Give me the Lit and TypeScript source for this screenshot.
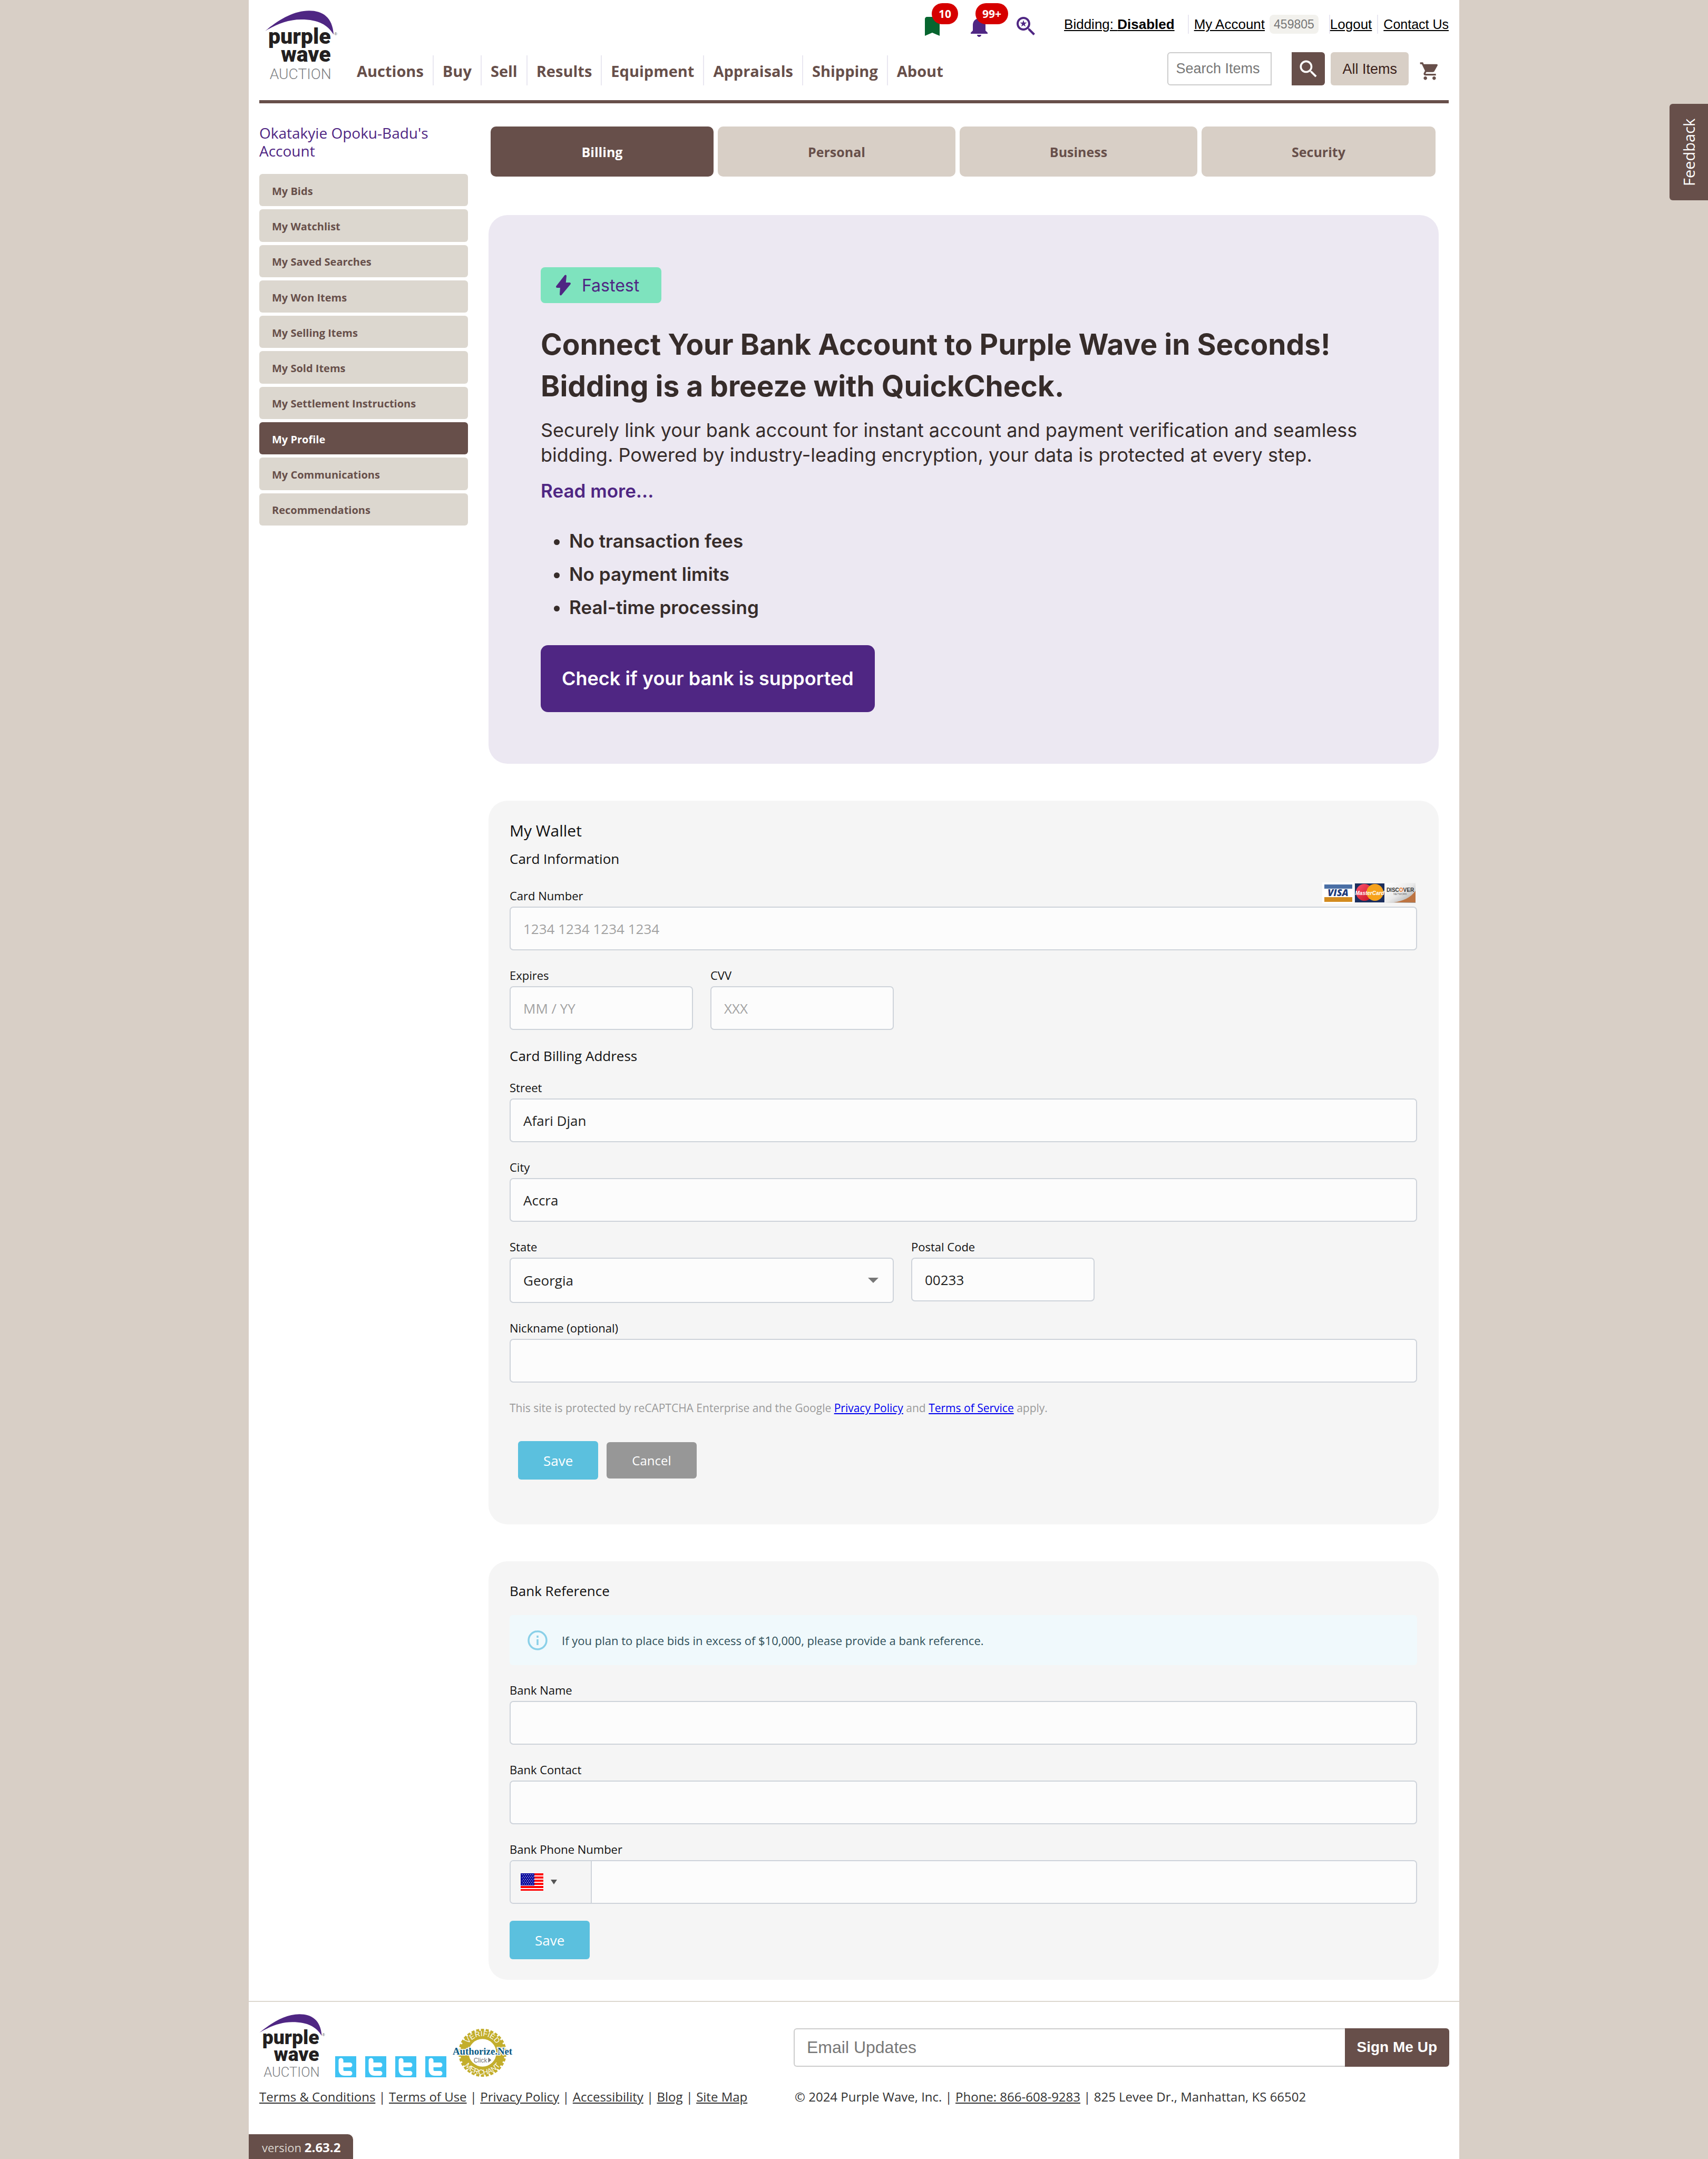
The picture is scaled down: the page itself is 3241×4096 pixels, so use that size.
import { LitElement, html, css, svg } from "lit";
import { customElement } from "lit/decorators.js";
import { classMap } from "lit/directives/class-map.js";

const NAV = ["Auctions", "Buy", "Sell", "Results", "Equipment", "Appraisals", "Shipping", "About"];

const SIDE = [
  "My Bids",
  "My Watchlist",
  "My Saved Searches",
  "My Won Items",
  "My Selling Items",
  "My Sold Items",
  "My Settlement Instructions",
  "My Profile",
  "My Communications",
  "Recommendations",
];

const TABS = ["Billing", "Personal", "Business", "Security"];

const PERKS = ["No transaction fees", "No payment limits", "Real-time processing"];

const FOOT = ["Terms & Conditions", "Terms of Use", "Privacy Policy", "Accessibility", "Blog", "Site Map"];

const logo = html`
  <svg class="logo-art" viewBox="0 0 128 122" role="img" aria-label="Purple Wave Auction">
    <path
      fill="#4f2683"
      d="M0 35.7C24 16 50 .3 77 .3C101 .3 118 12 120 42C109 25 94 15.6 63 15.6C40 15.6 20 24 0 35.7Z"
    />
    <g font-family="Roboto, Liberation Sans, sans-serif" font-weight="900" font-size="38" fill="#231f20">
      <text x="115" y="58" text-anchor="end">purple</text>
      <text x="115" y="90" text-anchor="end">wave</text>
    </g>
    <text x="116" y="120.5" text-anchor="end" font-family="Roboto, sans-serif" font-weight="300" font-size="26" fill="#808285">AUCTION</text>
    <text x="121" y="43" font-family="Liberation Sans, sans-serif" font-size="7" fill="#58595b">®</text>
  </svg>
`;

const bookmarkIcon = html`<svg class="icon-48" viewBox="0 0 24 24" fill="#07652f"><path d="M17 3H7c-1.1 0-2 .9-2 2v16l7-3 7 3V5c0-1.1-.9-2-2-2z" /></svg>`;

const bellIcon = html`<svg class="icon-48" viewBox="0 0 24 24" fill="#4f2683"><path d="M12 22c1.1 0 2-.9 2-2h-4c0 1.1.89 2 2 2zm6-6v-5c0-3.07-1.64-5.64-4.5-6.32V4c0-.83-.67-1.5-1.5-1.5s-1.5.67-1.5 1.5v.68C7.63 5.36 6 7.92 6 11v5l-2 2v1h16v-1l-2-2z" /></svg>`;

const GLASS =
  "M15.5 14h-.79l-.28-.27C15.41 12.59 16 11.11 16 9.5 16 5.91 13.09 3 9.5 3S3 5.91 3 9.5 5.91 16 9.5 16c1.61 0 3.09-.59 4.23-1.57l.27.28v.79l5 4.99L20.49 19l-4.99-5zm-6 0C7.01 14 5 11.99 5 9.5S7.01 5 9.5 5 14 7.01 14 9.5 11.99 14 9.5 14z";

const savedSearchIcon = html`<svg class="icon-48" viewBox="0 0 24 24" fill="#4f2683"><path d=${GLASS} /><path d="M9.5 6l.8 2.4h2.5l-2 1.5.75 2.4-2.05-1.45-2.05 1.45.75-2.4-2-1.5h2.5z" /></svg>`;

const searchIcon = html`<svg class="icon-44" viewBox="0 0 24 24" fill="#fff"><path d=${GLASS} /></svg>`;

const cartIcon = html`<svg class="icon-40" viewBox="0 0 24 24" fill="#674f4a"><path d="M7 18c-1.1 0-1.99.9-1.99 2S5.9 22 7 22s2-.9 2-2-.9-2-2-2zM1 2v2h2l3.6 7.59-1.35 2.45c-.16.28-.25.61-.25.96 0 1.1.9 2 2 2h12v-2H7.42c-.14 0-.25-.11-.25-.25l.03-.12.9-1.63h7.45c.75 0 1.41-.41 1.75-1.03l3.58-6.49c.08-.14.12-.31.12-.48 0-.55-.45-1-1-1H5.21l-.94-2H1zm16 16c-1.1 0-1.99.9-1.99 2s.89 2 1.99 2 2-.9 2-2-.9-2-2-2z" /></svg>`;

const boltIcon = html`<svg class="bolt" viewBox="0 0 28 40"><path fill="#4f2683" stroke="#4f2683" stroke-width="4" stroke-linejoin="round" d="M18 2.500L2 23H10L9 37.500L26 17H16.500Z" /></svg>`;

const infoIcon = html`<svg class="info-icon" viewBox="0 0 38 38" fill="none" stroke="#8ad0e8"><circle cx="19" cy="19" r="17" stroke-width="3.500" /><path stroke-width="3.500" d="M19 17v11M19 10v4" /></svg>`;

const caret = (cls: string) => html`<svg class=${cls} viewBox="0 0 20 10" preserveAspectRatio="none" aria-hidden="true"><path d="M0 0h20L10 10z" fill="currentColor" /></svg>`;

const cardBrands = html`
  <svg class="brands" viewBox="0 0 177 40" role="img" aria-label="Visa, MasterCard, Discover">
    <defs>
      <linearGradient id="disc" x1="0" y1="0" x2="1" y2="1">
        <stop offset="0" stop-color="#fff" />
        <stop offset=".5" stop-color="#eaeaea" />
        <stop offset="1" stop-color="#9a9a9a" />
      </linearGradient>
      <linearGradient id="mcl" x1="0" y1="0" x2="1" y2="1">
        <stop offset="0" stop-color="#ff5470" />
        <stop offset="1" stop-color="#c4101c" />
      </linearGradient>
    </defs>
    <rect width="60" height="40" fill="#fff" />
    <rect x="4" y="4" width="53" height="8" fill="#4a6fa5" />
    <rect x="4" y="28" width="53" height="9" fill="#d38b1e" />
    <text x="30" y="26" text-anchor="middle" font-family="Open Sans, sans-serif" font-weight="800" font-style="italic" font-size="18" fill="#1d3c7c">VISA</text>
    <rect x="62" y="2" width="56" height="36" fill="#1c2f5e" />
    <circle cx="80" cy="19" r="16" fill="url(#mcl)" />
    <circle cx="100" cy="19" r="16" fill="#f6a21c" />
    <text x="90" y="24" text-anchor="middle" font-family="Liberation Sans, sans-serif" font-weight="700" font-style="italic" font-size="10" fill="#fff">MasterCard</text>
    <rect x="119" y="1" width="58" height="38" fill="url(#disc)" />
    <path d="M177 16C168 29 152 36 136 38H177Z" fill="#bd7442" />
    <text x="148" y="18" text-anchor="middle" font-family="Liberation Sans, sans-serif" font-weight="700" font-size="10" fill="#333">DISC<tspan fill="#e8792a">O</tspan>VER</text>
    <text x="148" y="24" text-anchor="middle" font-family="Liberation Sans, sans-serif" font-size="5" fill="#666">NETWORK</text>
  </svg>
`;

const stars = Array.from({ length: 7 }, (_, r) =>
  Array.from({ length: 6 }, (_, c) => svg`<rect x=${2 + c * 4 + (r % 2) * 2} y=${2 + r * 3} width="2" height="1" fill="#c4c8ee" />`)
);

const flag = html`
  <svg class="flag" viewBox="0 0 43 33" role="img" aria-label="United States">
    <rect width="43" height="33" fill="#fff" />
    ${[0, 6, 12, 18, 24, 30].map((y) => svg`<rect y=${y} width="43" height=${y === 30 ? 3 : 4} fill="#f00" />`)}
    <rect width="26" height="23" fill="#0a0a9c" />
    ${stars}
  </svg>
`;

const twitter = html`
  <svg class="social" viewBox="0 0 40 40" aria-hidden="true">
    <rect width="40" height="40" fill="#3fc3f3" />
    <path d="M11 8V25Q11 32.500 18 32.500H28M12 16.500H28" fill="none" stroke="#fff" stroke-width="9" stroke-linecap="round" />
  </svg>
`;

const teeth = Array.from({ length: 30 }, (_, i) => svg`<rect x="54" y="1" width="6" height="8" fill="#c3ae2c" transform=${`rotate(${i * 12} 57 47)`} />`);

const seal = html`
  <svg class="seal" viewBox="0 0 114 94" role="img" aria-label="Authorize.Net verified merchant">
    <defs>
      <path id="arc-top" d="M25 47A32 32 0 0 1 89 47" />
      <path id="arc-bottom" d="M15 47A42 42 0 0 0 99 47" />
    </defs>
    ${teeth}
    <circle cx="57" cy="47" r="34.500" fill="none" stroke="#c3ae2c" stroke-width="16" />
    <g font-family="Liberation Sans, sans-serif" font-size="14" fill="#fff">
      <text text-anchor="middle"><textPath href="#arc-top" startOffset="50%">VERIFIED</textPath></text>
      <text text-anchor="middle"><textPath href="#arc-bottom" startOffset="50%">MERCHANT</textPath></text>
    </g>
    <text x="57" y="51" text-anchor="middle" font-family="Liberation Serif, serif" font-weight="700" font-size="19" fill="#0b5a86" stroke="#fff" stroke-width="3" paint-order="stroke">Authorize.Net</text>
    <text x="53" y="66" text-anchor="middle" font-family="Liberation Sans, sans-serif" font-size="12" fill="#777">Click</text>
    <path d="M68 56v10l6-5z" fill="#777" />
  </svg>
`;

interface Field {
  id: string;
  label: string;
  value?: string;
  placeholder?: string;
  cls?: string;
}

const field = ({ id, label, value = "", placeholder = "", cls = "" }: Field) => html`
  <div class="field ${cls}">
    <label class="label" for=${id}>${label}</label>
    <input class="box" id=${id} type="text" .value=${value} placeholder=${placeholder} />
  </div>
`;

@customElement("app-root")
export class AppRoot extends LitElement {
  static styles = css`
    :host {
      display: block;
      position: relative;
      min-height: 100vh;
      background: #d8cfc6;
      color: #111;
      font-family: "Open Sans", "Noto Sans", sans-serif;
      font-size: 26px;
      line-height: 40px;
    }
    * {
      box-sizing: border-box;
    }
    button,
    input,
    select {
      font: inherit;
      margin: 0;
      border: 0;
      padding: 0;
    }
    button {
      cursor: pointer;
    }
    h1,
    h2,
    h3,
    p,
    ul {
      margin: 0;
      padding: 0;
      font-weight: 400;
      font-size: inherit;
    }
    svg {
      display: block;
      flex: none;
      overflow: visible;
    }
    .page {
      display: flex;
      flex-direction: column;
      max-width: 2297px;
      min-height: 100vh;
      margin: 0 auto;
      background: #fff;
    }

    /* header */
    .header {
      display: flex;
      gap: 18px;
      margin: 0 20px;
      padding-bottom: 28px;
      border-bottom: 6px solid #674f4a;
    }
    .logo {
      padding: 20px 0 0 11px;
    }
    .logo-art {
      width: 127px;
      height: 120px;
    }
    .logo .logo-art {
      width: 139px;
      height: 132px;
    }
    .head-rows {
      display: flex;
      flex: 1;
      flex-direction: column;
      gap: 35px;
      padding-top: 28px;
    }
    .account {
      display: flex;
      justify-content: flex-end;
      height: 36px;
      font: 26px/36px "Liberation Sans", Arial, sans-serif;
    }
    .account a {
      color: #000;
    }
    .alerts {
      display: flex;
      gap: 41px;
      margin: -2px 48px 0 0;
    }
    .alert {
      position: relative;
      height: 48px;
    }
    .icon-48 {
      width: 48px;
      height: 48px;
    }
    .icon-44 {
      width: 44px;
      height: 44px;
    }
    .icon-40 {
      width: 40px;
      height: 40px;
    }
    .count {
      position: absolute;
      top: -20px;
      left: 100%;
      padding: 0 13px;
      border-radius: 20px;
      background: #d60000;
      color: #fff;
      font: 700 21px/40px "Open Sans", sans-serif;
      transform: translateX(-50%);
    }
    .bidding {
      margin-right: 25px;
    }
    .cell {
      display: flex;
      gap: 9px;
      padding: 0 10px;
      border-left: 2px solid #e9e7f1;
    }
    .cell.wide {
      padding-right: 20px;
    }
    .cell.tight {
      padding-left: 0;
    }
    .cell.last {
      padding-right: 0;
      font-size: 25px;
    }
    .chip {
      padding: 0 8px;
      border-radius: 8px;
      background: #f2f1ed;
      color: #777;
      font-size: 23px;
    }
    .main-row {
      display: flex;
      align-items: flex-end;
      justify-content: space-between;
    }
    .nav {
      display: flex;
    }
    .nav a {
      padding: 3px 17px 0;
      border-right: 2px solid #e9e7f1;
      color: #674f4a;
      font-weight: 700;
      font-size: 29px;
      line-height: 54px;
      text-decoration: none;
    }
    .nav a:last-child {
      border-right: 0;
    }
    .search {
      display: flex;
      align-items: center;
      padding-right: 16px;
      font: 27px/40px "Liberation Sans", Arial, sans-serif;
    }
    .search-box {
      width: 198px;
      height: 63px;
      margin-right: 38px;
      padding: 0 14px;
      border: 2px solid #ccc;
      border-radius: 6px 0 0 6px;
      background: #fff;
    }
    .search-box::placeholder,
    .mail-box::placeholder {
      color: #777;
      opacity: 1;
    }
    .search-btn {
      display: grid;
      place-items: center;
      width: 63px;
      height: 63px;
      border-radius: 0 6px 6px 0;
      background: #674f4a;
    }
    .all-items {
      height: 63px;
      margin: 0 20px 0 11px;
      padding: 0 22px;
      border-radius: 6px;
      background: #d8cfc6;
      color: #3b1f1a;
    }
    .cart {
      padding-top: 8px;
    }

    /* body columns */
    .columns {
      display: flex;
      gap: 39px;
      padding: 39px 39px 0 20px;
    }
    .side {
      flex: 0 0 396px;
    }
    .owner {
      margin-bottom: 27px;
      color: #4f2683;
      font-size: 28px;
      line-height: 34px;
    }
    .side-list {
      display: grid;
      grid-auto-rows: 1fr;
      gap: 6px;
      min-height: 667px;
      list-style: none;
    }
    .side-link {
      display: flex;
      align-items: center;
      height: 100%;
      padding: 4px 24px 0;
      border-radius: 6px;
      background: #dcd7cf;
      color: #674f4a;
      font-weight: 700;
      font-size: 20px;
      text-decoration: none;
    }
    .side-link.on {
      background: #674f4a;
      color: #fff;
    }
    .content {
      flex: 1;
      min-width: 0;
      padding-top: 5px;
    }
    .tabs {
      display: grid;
      grid-template-columns: 423fr 451fr 451fr 444fr;
      gap: 8px;
      margin: 0 6px 73px 4px;
    }
    .tab {
      height: 95px;
      border-radius: 10px;
      background: #d8cfc6;
      color: #674f4a;
      font-weight: 700;
      font-size: 25px;
    }
    .tab.on {
      background: #674f4a;
      color: #fff;
    }

    /* bank promo */
    .promo {
      margin-bottom: 70px;
      padding: 99px 99px 98px;
      border-radius: 36px;
      background: #ece8f2;
      color: #362c2a;
      font: 36px/47px Inter, sans-serif;
    }
    .fastest {
      display: inline-flex;
      gap: 21px;
      align-items: center;
      height: 68px;
      padding: 0 42px 0 29px;
      border-radius: 8px;
      background: #7ee3be;
      color: #4f2683;
      font-size: 32px;
      vertical-align: top;
    }
    .bolt {
      width: 28px;
      height: 40px;
    }
    .promo-title {
      margin: 39px 0 21px;
      font-weight: 700;
      font-size: 55px;
      line-height: 79px;
    }
    .promo-text {
      max-width: 1580px;
      margin-bottom: 21px;
    }
    .more {
      display: block;
      color: #4f2683;
      font-weight: 600;
      font-size: 35px;
      text-decoration: none;
    }
    .perks {
      margin: 40px 0;
      padding-left: 54px;
      font-weight: 600;
      font-size: 35px;
      line-height: 63px;
    }
    .check {
      height: 127px;
      padding: 0 40px;
      border-radius: 14px;
      background: #4f2683;
      color: #fff;
      font-weight: 600;
    }

    /* form cards */
    .card {
      display: flex;
      flex-direction: column;
      gap: 32px;
      margin-bottom: 70px;
      padding: 37px 41px 85px 40px;
      border-radius: 36px;
      background: #f5f5f5;
    }
    .card.short {
      margin-bottom: 40px;
      padding-top: 36px;
      padding-bottom: 39px;
    }
    .card-title {
      font-size: 30px;
    }
    .card-head {
      display: grid;
      gap: 13px;
      margin-bottom: -7px;
    }
    .card-sub {
      margin: -3px 0 -7px;
    }
    .short .card-sub {
      margin: 0 0 -6px;
    }
    .row {
      display: flex;
      gap: 33px;
    }
    .field {
      display: flex;
      flex-direction: column;
      gap: 6px;
    }
    .field.small {
      flex: 0 0 348px;
    }
    .field.medium {
      flex: 0 0 729px;
    }
    .label {
      font-size: 22px;
      line-height: 30px;
    }
    .label-row {
      display: flex;
      align-items: flex-end;
      justify-content: space-between;
      padding-right: 3px;
    }
    .brands {
      width: 177px;
      height: 40px;
    }
    .box {
      width: 100%;
      height: 83px;
      padding: 0 24px;
      border: 2px solid #ced3da;
      border-radius: 7px;
      background: #fcfcfc;
      color: #222;
    }
    .box::placeholder {
      color: #a2a2a2;
      opacity: 1;
    }
    .pick {
      display: grid;
      grid-template-columns: 1fr;
      align-items: center;
    }
    .pick > * {
      grid-area: 1 / 1;
    }
    .pick .box {
      height: 86px;
      appearance: none;
    }
    .pick-caret {
      justify-self: end;
      width: 20px;
      height: 10px;
      margin-right: 29px;
      color: #777;
      pointer-events: none;
    }
    .legal {
      margin-top: 1px;
      color: #9a9a9a;
      font-size: 21px;
      line-height: 30px;
    }
    .legal a {
      color: #00e;
    }
    .actions {
      display: flex;
      gap: 16px;
      align-items: center;
      margin: 16px 0 0 16px;
    }
    .save {
      align-self: flex-start;
      height: 73px;
      padding: 0 48px;
      border-radius: 6px;
      background: #5bc0de;
      color: #fff;
    }
    .cancel {
      height: 69px;
      padding: 0 48px;
      border-radius: 6px;
      background: #979797;
      color: #fff;
      font-size: 24px;
    }
    .note {
      display: flex;
      gap: 27px;
      align-items: center;
      min-height: 95px;
      padding: 0 34px;
      border-radius: 6px;
      background: #f0f9fc;
      color: #2f4f59;
      font-size: 22px;
    }
    .info-icon {
      width: 38px;
      height: 38px;
    }
    .phone {
      display: flex;
      height: 83px;
      overflow: hidden;
      border: 2px solid #ced3da;
      border-radius: 7px;
      background: #fcfcfc;
    }
    .country {
      display: flex;
      flex: 0 0 154px;
      gap: 14px;
      align-items: center;
      padding-left: 19px;
      border-right: 2px solid #ced3da;
      background: #f5f5f5;
      color: #555;
    }
    .flag {
      width: 43px;
      height: 33px;
    }
    .flag-caret {
      width: 12px;
      height: 9px;
    }
    .phone-input {
      flex: 1;
      padding: 0 24px;
      background: none;
    }

    /* footer */
    .footer {
      display: grid;
      grid-template-columns: 1014fr 1244fr;
      row-gap: 21px;
      align-items: center;
      padding: 23px 19px 0 20px;
      border-top: 2px solid #dcd7cf;
      color: #333;
      font-size: 24px;
      line-height: 32px;
    }
    .footer a {
      color: #333;
    }
    .marks {
      display: flex;
      align-items: flex-end;
    }
    .social {
      width: 40px;
      height: 40px;
      margin-left: 17px;
    }
    .seal {
      width: 113px;
      height: 93px;
      margin-left: 12px;
    }
    .mail {
      display: flex;
      margin-top: 6px;
      font: 32px/40px "Liberation Sans", Arial, sans-serif;
    }
    .mail-box {
      flex: 1;
      height: 73px;
      padding: 0 23px;
      border: 2px solid #ccc;
      border-right: 0;
      border-radius: 6px 0 0 6px;
      background: #fff;
    }
    .sign {
      height: 73px;
      padding: 0 23px;
      border-radius: 0 6px 6px 0;
      background: #674f4a;
      color: #fff;
      font-weight: 700;
      font-size: 28px;
    }
    .company {
      padding-left: 2px;
    }
    .version {
      align-self: flex-start;
      margin-top: auto;
      padding: 5px 24px 2px 25px;
      border-radius: 0 10px 0 0;
      background: #674f4a;
      color: #dcd7cf;
      font-size: 22px;
    }
    .version b {
      color: #fff;
      font-size: 24px;
    }
    .feedback {
      position: absolute;
      top: 197px;
      right: 0;
      width: 73px;
      height: 183px;
      border-radius: 0 6px 6px 0;
      background: #674f4a;
      color: #fff;
      font-size: 29px;
      writing-mode: vertical-rl;
      transform: rotate(180deg);
    }
  `;

  private header() {
    return html`
      <header class="header">
        <a class="logo" href="#home">${logo}</a>
        <div class="head-rows">
          <div class="account">
            <div class="alerts">
              <a class="alert" href="#watchlist" aria-label="Watchlist">${bookmarkIcon}<span class="count">10</span></a>
              <a class="alert" href="#alerts" aria-label="Notifications">${bellIcon}<span class="count">99+</span></a>
              <a class="alert" href="#saved" aria-label="Saved searches">${savedSearchIcon}</a>
            </div>
            <a class="bidding" href="#bidding">Bidding: <b>Disabled</b></a>
            <div class="cell wide"><a href="#account">My Account</a><span class="chip">459805</span></div>
            <div class="cell tight"><a href="#logout">Logout</a></div>
            <div class="cell last"><a href="#contact">Contact Us</a></div>
          </div>
          <div class="main-row">
            <nav class="nav">${NAV.map((n) => html`<a href="#${n.toLowerCase()}">${n}</a>`)}</nav>
            <div class="search">
              <input class="search-box" type="text" placeholder="Search Items" aria-label="Search Items" />
              <button class="search-btn" aria-label="Search">${searchIcon}</button>
              <button class="all-items">All Items</button>
              <a class="cart" href="#cart" aria-label="Cart">${cartIcon}</a>
            </div>
          </div>
        </div>
      </header>
    `;
  }

  private sidebar() {
    return html`
      <aside class="side">
        <h2 class="owner">Okatakyie Opoku-Badu's Account</h2>
        <ul class="side-list">
          ${SIDE.map((s) => html`<li><a class=${classMap({ "side-link": true, on: s === "My Profile" })} href="#side">${s}</a></li>`)}
        </ul>
      </aside>
    `;
  }

  private promo() {
    return html`
      <section class="promo">
        <span class="fastest">${boltIcon}Fastest</span>
        <h1 class="promo-title">Connect Your Bank Account to Purple Wave in Seconds!<br />Bidding is a breeze with QuickCheck.</h1>
        <p class="promo-text">
          Securely link your bank account for instant account and payment verification and seamless bidding. Powered by
          industry-leading encryption, your data is protected at every step.
        </p>
        <a class="more" href="#more">Read more...</a>
        <ul class="perks">
          ${PERKS.map((p) => html`<li>${p}</li>`)}
        </ul>
        <button class="check">Check if your bank is supported</button>
      </section>
    `;
  }

  private wallet() {
    return html`
      <section class="card">
        <div class="card-head">
          <h2 class="card-title">My Wallet</h2>
          <h3>Card Information</h3>
        </div>
        <div class="field">
          <div class="label-row"><label class="label" for="card">Card Number</label>${cardBrands}</div>
          <input class="box" id="card" type="text" placeholder="1234 1234 1234 1234" />
        </div>
        <div class="row">
          ${field({ id: "expires", label: "Expires", placeholder: "MM / YY", cls: "small" })}
          ${field({ id: "cvv", label: "CVV", placeholder: "XXX", cls: "small" })}
        </div>
        <h3 class="card-sub">Card Billing Address</h3>
        ${field({ id: "street", label: "Street", value: "Afari Djan" })}
        ${field({ id: "city", label: "City", value: "Accra" })}
        <div class="row">
          <div class="field medium">
            <label class="label" for="state">State</label>
            <div class="pick">
              <select class="box" id="state">
                <option>Georgia</option>
              </select>
              ${caret("pick-caret")}
            </div>
          </div>
          ${field({ id: "postal", label: "Postal Code", value: "00233", cls: "small" })}
        </div>
        ${field({ id: "nick", label: "Nickname (optional)" })}
        <p class="legal">
          This site is protected by reCAPTCHA Enterprise and the Google <a href="#privacy">Privacy Policy</a> and
          <a href="#terms">Terms of Service</a> apply.
        </p>
        <div class="actions">
          <button class="save">Save</button>
          <button class="cancel">Cancel</button>
        </div>
      </section>
    `;
  }

  private bank() {
    return html`
      <section class="card short">
        <h2 class="card-sub">Bank Reference</h2>
        <div class="note">${infoIcon}<span>If you plan to place bids in excess of $10,000, please provide a bank reference.</span></div>
        ${field({ id: "bank-name", label: "Bank Name" })} ${field({ id: "bank-contact", label: "Bank Contact" })}
        <div class="field">
          <label class="label" for="bank-phone">Bank Phone Number</label>
          <div class="phone">
            <button class="country" aria-label="Country code">${flag}${caret("flag-caret")}</button>
            <input class="phone-input" id="bank-phone" type="tel" />
          </div>
        </div>
        <button class="save">Save</button>
      </section>
    `;
  }

  private footer() {
    return html`
      <footer class="footer">
        <div class="marks">${logo}${twitter}${twitter}${twitter}${twitter}${seal}</div>
        <div class="mail">
          <input class="mail-box" type="email" placeholder="Email Updates" aria-label="Email Updates" />
          <button class="sign">Sign Me Up</button>
        </div>
        <div>${FOOT.map((f, i) => html`${i ? " | " : ""}<a href="#footer">${f}</a>`)}</div>
        <div class="company">© 2024 Purple Wave, Inc. | <a href="#phone">Phone: 866-608-9283</a> | 825 Levee Dr., Manhattan, KS 66502</div>
      </footer>
    `;
  }

  render() {
    return html`
      <div class="page">
        ${this.header()}
        <main class="columns">
          ${this.sidebar()}
          <div class="content">
            <div class="tabs">
              ${TABS.map((t, i) => html`<button class=${classMap({ tab: true, on: i === 0 })}>${t}</button>`)}
            </div>
            ${this.promo()} ${this.wallet()} ${this.bank()}
          </div>
        </main>
        ${this.footer()}
        <div class="version">version <b>2.63.2</b></div>
      </div>
      <button class="feedback">Feedback</button>
    `;
  }
}
